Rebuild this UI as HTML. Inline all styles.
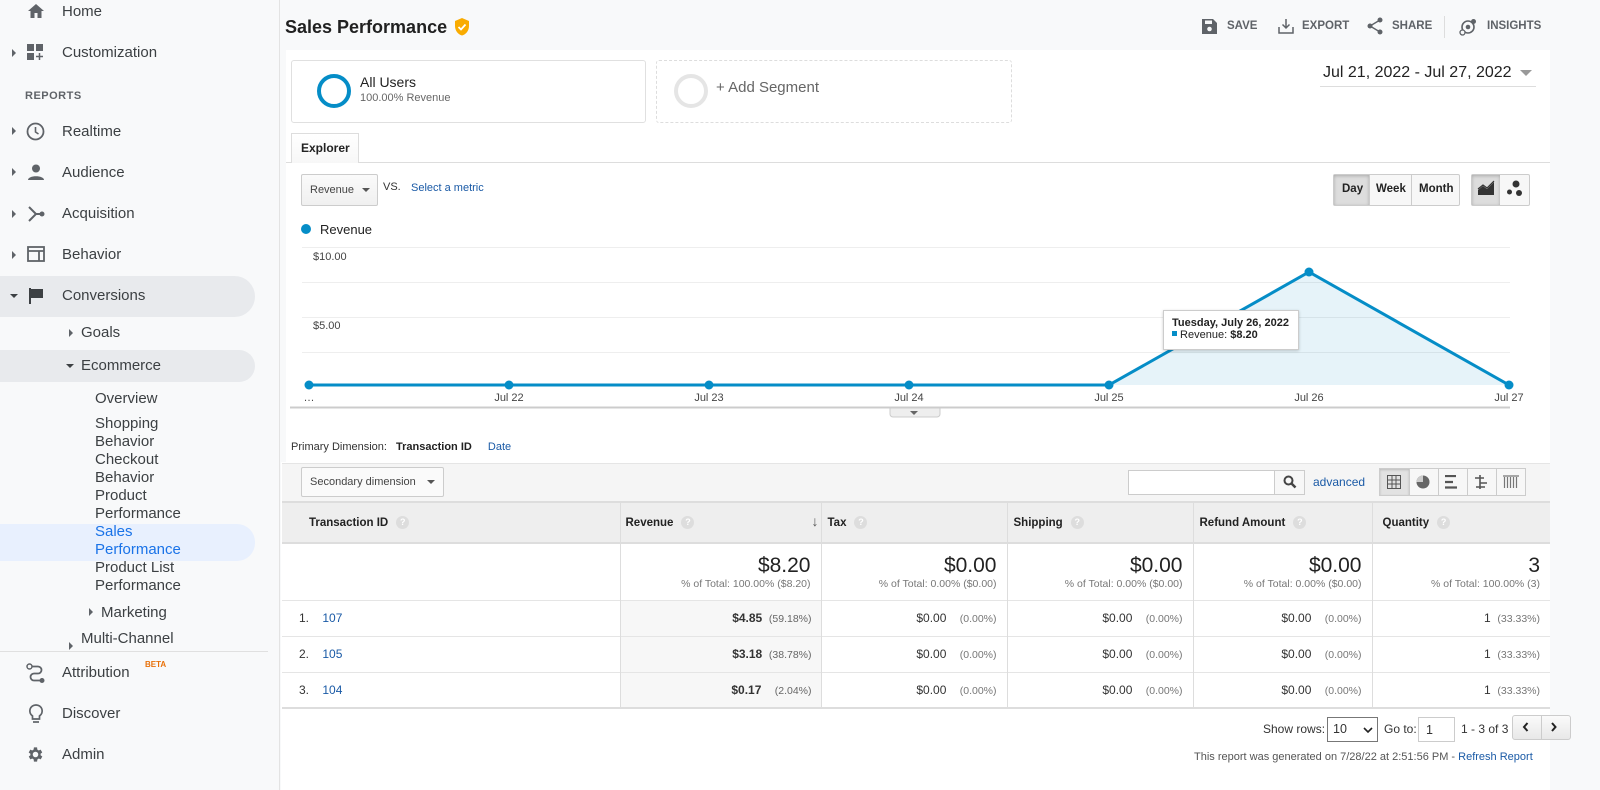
<!DOCTYPE html>
<html><head><meta charset="utf-8"><style>
*{box-sizing:border-box;margin:0;padding:0}
body{width:1600px;height:790px;overflow:hidden;background:#f8f9fa;font-family:"Liberation Sans",Arial,sans-serif;color:#333;position:relative}
.a{position:absolute}
.nav{font-size:15px;color:#3c4043;}
.tri{position:absolute;width:0;height:0;border-top:4px solid transparent;border-bottom:4px solid transparent;border-left:4px solid #5f6368}
.trid{position:absolute;width:0;height:0;border-left:4px solid transparent;border-right:4px solid transparent;border-top:4px solid #3c4043}
.q{display:inline-block;width:13px;height:13px;border-radius:50%;background:#ddd;color:#fff;font-size:9px;text-align:center;line-height:13px;margin-left:8px;vertical-align:1px}
th,td{font-size:12px}
.big{font-size:21px;color:#222}
.sm{font-size:10.5px;color:#777}
.link{color:#1a5aa6}
</style></head><body>
<!-- sidebar -->
<svg class="a" style="left:27px;top:3px" width="18" height="16" viewBox="0 0 18 16"><path d="M9 1L1 8h2.5v7h4v-5h3v5h4V8H17z" fill="#5f6368"/></svg>
<div class="a nav" style="left:62px;top:3px">Home</div>
<div class="tri" style="left:12px;top:49px"></div>
<svg class="a" style="left:27px;top:44px" width="18" height="18"><rect x="0" y="0" width="7" height="7" fill="#5f6368"/><rect x="9" y="0" width="7" height="7" fill="#5f6368"/><rect x="0" y="9" width="7" height="7" fill="#5f6368"/><path d="M12.5 9v7M9 12.5h7" stroke="#5f6368" stroke-width="1.5"/></svg>
<div class="a nav" style="left:62px;top:44px">Customization</div>
<div class="a" style="left:25px;top:90px;font-size:11px;color:#5f6368;font-weight:bold;letter-spacing:.5px">REPORTS</div>
<div class="tri" style="left:12px;top:127px"></div>
<svg class="a" style="left:26px;top:122px" width="19" height="19"><circle cx="9.5" cy="9.5" r="8" fill="none" stroke="#5f6368" stroke-width="1.8"/><path d="M9.5 5v5l3 2" fill="none" stroke="#5f6368" stroke-width="1.6"/></svg>
<div class="a nav" style="left:62px;top:123px">Realtime</div>
<div class="tri" style="left:12px;top:168px"></div>
<svg class="a" style="left:27px;top:164px" width="18" height="16"><circle cx="9" cy="4.5" r="4" fill="#5f6368"/><path d="M1 16c0-5 16-5 16 0z" fill="#5f6368"/></svg>
<div class="a nav" style="left:62px;top:164px">Audience</div>
<div class="tri" style="left:12px;top:210px"></div>
<svg class="a" style="left:27px;top:205px" width="18" height="18"><path d="M2 2l7 7-7 7M9 9h6" fill="none" stroke="#5f6368" stroke-width="2"/><circle cx="15" cy="9" r="2.5" fill="#5f6368"/></svg>
<div class="a nav" style="left:62px;top:205px">Acquisition</div>
<div class="tri" style="left:12px;top:251px"></div>
<svg class="a" style="left:27px;top:246px" width="18" height="16"><rect x="1" y="1" width="16" height="14" fill="none" stroke="#5f6368" stroke-width="1.8"/><path d="M1 5h16M12 5v10" stroke="#5f6368" stroke-width="1.8"/></svg>
<div class="a nav" style="left:62px;top:246px">Behavior</div>
<div class="a" style="left:0;top:276px;width:255px;height:41px;background:#e8eaed;border-radius:0 21px 21px 0"></div>
<div class="trid" style="left:10px;top:294px"></div>
<svg class="a" style="left:29px;top:288px" width="15" height="16"><path d="M1 0v16" stroke="#3c4043" stroke-width="2"/><path d="M2 1h12v9H2z" fill="#3c4043"/></svg>
<div class="a nav" style="left:62px;top:287px">Conversions</div>
<div class="tri" style="left:69px;top:329px"></div>
<div class="a nav" style="left:81px;top:324px">Goals</div>
<div class="a" style="left:0;top:350px;width:255px;height:32px;background:#e8eaed;border-radius:0 16px 16px 0"></div>
<div class="trid" style="left:66px;top:364px"></div>
<div class="a nav" style="left:81px;top:357px">Ecommerce</div>
<div class="a" style="left:0;top:524px;width:255px;height:37px;background:#e8f0fe;border-radius:0 18px 18px 0"></div>
<div class="a nav" style="left:95px;top:390px;line-height:18px">Overview</div>
<div class="a nav" style="left:95px;top:415px;line-height:18px">Shopping<br>Behavior<br>Checkout<br>Behavior<br>Product<br>Performance<br><span style="color:#1a73e8">Sales<br>Performance</span><br>Product List<br>Performance</div>
<div class="tri" style="left:89px;top:608px"></div>
<div class="a nav" style="left:101px;top:604px">Marketing</div>
<div class="tri" style="left:69px;top:642px"></div>
<div class="a nav" style="left:81px;top:630px">Multi-Channel</div>
<div class="a" style="left:0;top:651px;width:268px;height:1px;background:#e0e0e0"></div>
<svg class="a" style="left:26px;top:663px" width="20" height="20"><circle cx="3.5" cy="3.5" r="2.5" fill="none" stroke="#5f6368" stroke-width="1.5"/><path d="M6 3.5h6a3.5 3.5 0 0 1 0 7H8a3.5 3.5 0 0 0 0 7h6" fill="none" stroke="#5f6368" stroke-width="1.8"/><circle cx="16" cy="17.5" r="2.5" fill="#5f6368"/></svg>
<div class="a nav" style="left:62px;top:664px">Attribution</div>
<div class="a" style="left:145px;top:660px;font-size:8px;color:#e8710a;font-weight:bold">BETA</div>
<svg class="a" style="left:28px;top:704px" width="16" height="20"><path d="M8 1a6 6 0 0 0-3.5 11v3h7v-3A6 6 0 0 0 8 1z" fill="none" stroke="#5f6368" stroke-width="1.7"/><path d="M5 18h6" stroke="#5f6368" stroke-width="1.7"/></svg>
<div class="a nav" style="left:62px;top:705px">Discover</div>
<svg class="a" style="left:26px;top:745px" width="19" height="19" viewBox="0 0 24 24"><path fill="#5f6368" d="M19.4 13a7.5 7.5 0 0 0 0-2l2.1-1.6-2-3.5-2.5 1a7 7 0 0 0-1.7-1L15 3h-4l-.4 2.9a7 7 0 0 0-1.7 1l-2.5-1-2 3.5L6.6 11a7.5 7.5 0 0 0 0 2l-2.1 1.6 2 3.5 2.5-1a7 7 0 0 0 1.7 1L11 21h4l.4-2.9a7 7 0 0 0 1.7-1l2.5 1 2-3.5zM13 15.5a3.5 3.5 0 1 1 0-7 3.5 3.5 0 0 1 0 7z" transform="translate(-1 0)"/></svg>
<div class="a nav" style="left:62px;top:746px">Admin</div>
<div class="a" style="left:279px;top:0;width:1px;height:790px;background:#e3e3e3"></div>

<!-- header -->
<div class="a" style="left:285px;top:17px;font-size:18px;font-weight:bold;color:#212121;white-space:nowrap">Sales Performance <svg style="vertical-align:-3px;margin-left:2px" width="16" height="18"><path d="M8 0L1 3v5c0 4.5 3 8.5 7 9.5 4-1 7-5 7-9.5V3z" fill="#f9ab00"/><path d="M4.5 9l2.5 2.5 4.5-5" fill="none" stroke="#fff" stroke-width="1.8"/></svg></div>
<div class="a" style="left:1202px;top:20px;font-size:11.5px;font-weight:bold;color:#5f6368;word-spacing:2px">
<svg style="position:absolute;left:0;top:-1px" width="15" height="15"><path d="M0 0h11l4 4v11H0z" fill="#5f6368"/><rect x="3" y="1.5" width="7" height="3.5" fill="#f8f9fa"/><circle cx="7.5" cy="10" r="2.3" fill="#f8f9fa"/></svg>
<span style="position:absolute;left:25px">SAVE</span>
<svg style="position:absolute;left:76px;top:-2px" width="16" height="16"><path d="M8 1v9M4.5 6.5L8 10l3.5-3.5M1 9v6h14V9" fill="none" stroke="#5f6368" stroke-width="1.5"/></svg>
<span style="position:absolute;left:100px">EXPORT</span>
<svg style="position:absolute;left:165px;top:-3px" width="16" height="18"><circle cx="13" cy="3" r="2.5" fill="#5f6368"/><circle cx="3" cy="9" r="2.5" fill="#5f6368"/><circle cx="13" cy="15" r="2.5" fill="#5f6368"/><path d="M13 3L3 9l10 6" fill="none" stroke="#5f6368" stroke-width="1.4"/></svg>
<span style="position:absolute;left:190px">SHARE</span>
<div style="position:absolute;left:242px;top:-4px;width:1px;height:22px;background:#ddd"></div>
<svg style="position:absolute;left:257px;top:-2px" width="18" height="18"><circle cx="9" cy="9" r="6" fill="none" stroke="#5f6368" stroke-width="1.6"/><circle cx="9" cy="9" r="2.3" fill="#5f6368"/><circle cx="14.5" cy="3.5" r="2.5" fill="#5f6368"/><circle cx="3.5" cy="14.5" r="2.5" fill="#f8f9fa" stroke="#5f6368" stroke-width="1.3"/></svg>
<span style="position:absolute;left:285px">INSIGHTS</span>
</div>

<!-- main panel -->
<div class="a" style="left:286px;top:50px;width:1264px;height:740px;background:#fff"></div>
<div class="a" style="left:281px;top:462px;width:1269px;height:328px;background:#fff"></div>
<div class="a" style="left:291px;top:60px;width:355px;height:63px;border:1px solid #e0e0e0;border-radius:3px"></div>
<div class="a" style="left:317px;top:74px;width:34px;height:34px;border:4px solid #058dc7;border-radius:50%"></div>
<div class="a" style="left:360px;top:74px;font-size:14px;color:#222">All Users</div>
<div class="a" style="left:360px;top:92px;font-size:11px;color:#666">100.00% Revenue</div>
<div class="a" style="left:656px;top:60px;width:356px;height:63px;border:1px dashed #ddd;border-radius:3px"></div>
<div class="a" style="left:674px;top:74px;width:34px;height:34px;border:4px solid #e5e5e5;border-radius:50%"></div>
<div class="a" style="left:716px;top:79px;font-size:15px;color:#666">+ Add Segment</div>
<div class="a" style="left:1323px;top:64px;font-size:16px;color:#222">Jul 21, 2022 - Jul 27, 2022</div>
<div class="a" style="left:1520px;top:70px;border-left:6px solid transparent;border-right:6px solid transparent;border-top:6px solid #999"></div>
<div class="a" style="left:1320px;top:86px;width:216px;height:1px;background:#ddd"></div>

<div class="a" style="left:286px;top:162px;width:1264px;height:1px;background:#ddd"></div>
<div class="a" style="left:291px;top:133px;width:68px;height:30px;border:1px solid #ddd;border-bottom:none;background:linear-gradient(#fff,#f7f7f7);font-size:12px;font-weight:bold;color:#222;padding:7px 0 0 9px">Explorer</div>

<div class="a" style="left:301px;top:174px;width:77px;height:32px;border:1px solid #ccc;border-radius:2px;background:linear-gradient(#fafafa,#f0f0f0);font-size:11px;color:#444;padding:9px 0 0 8px">Revenue</div>
<div class="a" style="left:362px;top:188px;border-left:4px solid transparent;border-right:4px solid transparent;border-top:4px solid #555"></div>
<div class="a" style="left:383px;top:181px;font-size:11px;color:#333">VS.</div>
<div class="a link" style="left:411px;top:182px;font-size:11px">Select a metric</div>

<div class="a" style="left:1333px;top:174px;width:127px;height:32px;border:1px solid #ccc;border-radius:2px;background:#f7f7f7;font-size:11.5px;font-weight:bold;color:#333"></div>
<div class="a" style="left:1334px;top:175px;width:35px;height:30px;background:#ddd;box-shadow:inset 0 1px 3px #aaa"></div>
<div class="a" style="left:1369px;top:175px;width:1px;height:30px;background:#ccc"></div>
<div class="a" style="left:1411px;top:175px;width:1px;height:30px;background:#ccc"></div>
<div class="a" style="left:1342px;top:183px;font-size:11.5px;font-weight:bold;color:#222">Day</div>
<div class="a" style="left:1376px;top:183px;font-size:11.5px;font-weight:bold;color:#222">Week</div>
<div class="a" style="left:1419px;top:183px;font-size:11.5px;font-weight:bold;color:#222">Month</div>
<div class="a" style="left:1471px;top:174px;width:59px;height:32px;border:1px solid #ccc;border-radius:2px;background:#f7f7f7"></div>
<div class="a" style="left:1472px;top:175px;width:28px;height:30px;background:#ddd;box-shadow:inset 0 1px 3px #aaa"></div>
<svg class="a" style="left:1477px;top:180px" width="18" height="16"><path d="M1 15V10l5-4 4 3 7-7v13z" fill="#333"/><path d="M1 9l5-4 4 3 7-7" fill="none" stroke="#333" stroke-width="1.2"/></svg>
<svg class="a" style="left:1506px;top:180px" width="18" height="18"><circle cx="10" cy="4" r="3.5" fill="#333"/><circle cx="3.5" cy="12" r="2.5" fill="#333"/><circle cx="13" cy="13" r="3" fill="#333"/></svg>

<!-- chart -->
<div class="a" style="left:301px;top:224px;width:10px;height:10px;border-radius:50%;background:#058dc7"></div>
<div class="a" style="left:320px;top:222px;font-size:13px;color:#222">Revenue</div>
<svg class="a" style="left:280px;top:240px" width="1270" height="190">
<g stroke="#eee" stroke-width="1"><path d="M22 7.5H1230M22 42.5H1230M22 77.5H1230M22 112.5H1230"/></g>
<path d="M10 167.5H1230" stroke="#ccc" stroke-width="2"/>
<text x="33" y="20" font-size="11" fill="#444" font-family="Liberation Sans">$10.00</text>
<text x="33" y="89" font-size="11" fill="#444" font-family="Liberation Sans">$5.00</text>
<path d="M829 145L1029 32L1229 145z" fill="#058dc7" fill-opacity=".1"/>
<path d="M29 145H829L1029 32L1229 145" fill="none" stroke="#058dc7" stroke-width="3"/>
<g fill="#058dc7"><circle cx="29" cy="145" r="4.5"/><circle cx="229" cy="145" r="4.5"/><circle cx="429" cy="145" r="4.5"/><circle cx="629" cy="145" r="4.5"/><circle cx="829" cy="145" r="4.5"/><circle cx="1029" cy="32" r="4.5"/><circle cx="1229" cy="145" r="4.5"/></g>
<g font-size="11" fill="#444" font-family="Liberation Sans" text-anchor="middle"><text x="29" y="161">…</text><text x="229" y="161">Jul 22</text><text x="429" y="161">Jul 23</text><text x="629" y="161">Jul 24</text><text x="829" y="161">Jul 25</text><text x="1029" y="161">Jul 26</text><text x="1229" y="161">Jul 27</text></g>
<path d="M610 168h50v6a3 3 0 0 1-3 3h-44a3 3 0 0 1-3-3z" fill="#eee" stroke="#ccc"/><path d="M630 171h8l-4 4z" fill="#666"/>
</svg>
<div class="a" style="left:1163px;top:310px;width:136px;height:40px;background:#fff;border:1px solid #ccc;box-shadow:0 1px 3px rgba(0,0,0,.2);font-size:11px;padding:6px 0 0 8px;color:#222"><b>Tuesday, July 26, 2022</b><br><span style="display:inline-block;width:5px;height:5px;background:#058dc7;vertical-align:2px"></span> Revenue: <b>$8.20</b></div>

<div class="a" style="left:291px;top:441px;font-size:11px;color:#333">Primary Dimension: <b style="margin-left:6px;color:#222">Transaction ID</b> <span class="link" style="margin-left:13px">Date</span></div>

<!-- toolbar -->
<div class="a" style="left:282px;top:463px;width:1268px;height:38px;background:#f5f5f5;border-top:1px solid #e5e5e5"></div>
<div class="a" style="left:301px;top:467px;width:143px;height:30px;border:1px solid #ccc;border-radius:2px;background:#fafafa;font-size:11px;color:#444;padding:8px 0 0 8px">Secondary dimension</div>
<div class="a" style="left:427px;top:480px;border-left:4px solid transparent;border-right:4px solid transparent;border-top:4px solid #555"></div>
<div class="a" style="left:1128px;top:470px;width:177px;height:25px;border:1px solid #ccc;background:#fff"></div>
<div class="a" style="left:1274px;top:470px;width:31px;height:25px;border:1px solid #ccc;background:#f7f7f7"></div>
<svg class="a" style="left:1283px;top:475px" width="14" height="14"><circle cx="5.5" cy="5.5" r="4" fill="none" stroke="#444" stroke-width="2"/><path d="M8.5 8.5l4 4" stroke="#444" stroke-width="2.5"/></svg>
<div class="a link" style="left:1313px;top:475px;font-size:12px">advanced</div>
<div class="a" style="left:1379px;top:468px;width:147px;height:28px;border:1px solid #ccc;background:#f7f7f7"></div>
<div class="a" style="left:1380px;top:469px;width:29px;height:26px;background:#e2e2e2;box-shadow:inset 0 1px 2px #bbb"></div>
<div class="a" style="left:1409px;top:469px;width:1px;height:26px;background:#ccc"></div>
<div class="a" style="left:1438px;top:469px;width:1px;height:26px;background:#ccc"></div>
<div class="a" style="left:1467px;top:469px;width:1px;height:26px;background:#ccc"></div>
<div class="a" style="left:1496px;top:469px;width:1px;height:26px;background:#ccc"></div>
<svg class="a" style="left:1387px;top:475px" width="14" height="14"><path d="M.5.5h13v13H.5zM5 .5v13M9 .5v13M.5 5h13M.5 9h13" fill="none" stroke="#555"/></svg>
<svg class="a" style="left:1416px;top:475px" width="14" height="14"><circle cx="7" cy="7" r="6.5" fill="#666"/><path d="M7 7V.5A6.5 6.5 0 0 0 .5 7z" fill="#ccc"/></svg>
<svg class="a" style="left:1445px;top:475px" width="14" height="14"><path d="M0 1h11M0 7h8M0 12.5h12" stroke="#555" stroke-width="2.2"/></svg>
<svg class="a" style="left:1474px;top:475px" width="14" height="14"><path d="M6 0v14M1 3h9M6 8h7M2 12h9" stroke="#555" stroke-width="1.6"/></svg>
<svg class="a" style="left:1503px;top:475px" width="16" height="14"><path d="M1.5 2v11M4.5 2v11M7.5 2v11M10.5 2v11M13.5 2v11M0 1h16" stroke="#777" stroke-width="1.2"/></svg>

<!-- table -->
<table class="a" style="left:282px;top:501px;width:1268px;border-collapse:collapse;table-layout:fixed">
<colgroup><col style="width:338px"><col style="width:201px"><col style="width:186px"><col style="width:186px"><col style="width:179px"><col style="width:178px"></colgroup>
<tr style="height:41px;background:#eee;border-top:2px solid #ddd;border-bottom:2px solid #ddd">
<th style="text-align:left;padding-left:27px;font-size:11.5px;color:#222;vertical-align:top;padding-top:13px">Transaction ID<span class="q">?</span></th>
<th style="text-align:left;padding-left:5px;font-size:11.5px;color:#222;border-left:1px solid #ddd;position:relative">Revenue<span class="q">?</span><span style="position:absolute;right:2px;top:10px;font-size:14px;color:#555;font-weight:normal">↓</span></th>
<th style="text-align:left;padding-left:6px;font-size:11.5px;color:#222;border-left:1px solid #ddd">Tax<span class="q">?</span></th>
<th style="text-align:left;padding-left:6px;font-size:11.5px;color:#222;border-left:1px solid #ddd">Shipping<span class="q">?</span></th>
<th style="text-align:left;padding-left:6px;font-size:11.5px;color:#222;border-left:1px solid #ddd">Refund Amount<span class="q">?</span></th>
<th style="text-align:left;padding-left:10px;font-size:11.5px;color:#222;border-left:1px solid #ddd">Quantity<span class="q">?</span></th>
</tr>
<tr style="height:57px;text-align:right;border-bottom:1px solid #e5e5e5">
<td></td>
<td style="border-left:1px solid #ddd;padding-right:10px"><div class="big">$8.20</div><div class="sm">% of Total: 100.00% ($8.20)</div></td>
<td style="border-left:1px solid #ddd;padding-right:10px"><div class="big">$0.00</div><div class="sm">% of Total: 0.00% ($0.00)</div></td>
<td style="border-left:1px solid #ddd;padding-right:10px"><div class="big">$0.00</div><div class="sm">% of Total: 0.00% ($0.00)</div></td>
<td style="border-left:1px solid #ddd;padding-right:10px"><div class="big">$0.00</div><div class="sm">% of Total: 0.00% ($0.00)</div></td>
<td style="border-left:1px solid #ddd;padding-right:10px"><div class="big">3</div><div class="sm">% of Total: 100.00% (3)</div></td>
</tr>
<tr style="height:36px;border-bottom:1px solid #e5e5e5;text-align:right"><td style="text-align:left;padding-left:17px">1.&nbsp;&nbsp;&nbsp;&nbsp;<span class="link">107</span></td><td style="border-left:1px solid #ddd;background:#f7f7f7;padding-right:9px"><b>$4.85</b>&nbsp;&nbsp;<span class="sm" style="color:#666">(59.18%)</span></td><td style="border-left:1px solid #ddd;padding-right:10px">$0.00&nbsp;&nbsp;&nbsp;&nbsp;<span class="sm">(0.00%)</span></td><td style="border-left:1px solid #ddd;padding-right:10px">$0.00&nbsp;&nbsp;&nbsp;&nbsp;<span class="sm">(0.00%)</span></td><td style="border-left:1px solid #ddd;padding-right:10px">$0.00&nbsp;&nbsp;&nbsp;&nbsp;<span class="sm">(0.00%)</span></td><td style="border-left:1px solid #ddd;padding-right:10px">1&nbsp;&nbsp;<span class="sm">(33.33%)</span></td></tr>
<tr style="height:36px;border-bottom:1px solid #e5e5e5;text-align:right"><td style="text-align:left;padding-left:17px">2.&nbsp;&nbsp;&nbsp;&nbsp;<span class="link">105</span></td><td style="border-left:1px solid #ddd;background:#f7f7f7;padding-right:9px"><b>$3.18</b>&nbsp;&nbsp;<span class="sm" style="color:#666">(38.78%)</span></td><td style="border-left:1px solid #ddd;padding-right:10px">$0.00&nbsp;&nbsp;&nbsp;&nbsp;<span class="sm">(0.00%)</span></td><td style="border-left:1px solid #ddd;padding-right:10px">$0.00&nbsp;&nbsp;&nbsp;&nbsp;<span class="sm">(0.00%)</span></td><td style="border-left:1px solid #ddd;padding-right:10px">$0.00&nbsp;&nbsp;&nbsp;&nbsp;<span class="sm">(0.00%)</span></td><td style="border-left:1px solid #ddd;padding-right:10px">1&nbsp;&nbsp;<span class="sm">(33.33%)</span></td></tr>
<tr style="height:36px;border-bottom:2px solid #ddd;text-align:right"><td style="text-align:left;padding-left:17px">3.&nbsp;&nbsp;&nbsp;&nbsp;<span class="link">104</span></td><td style="border-left:1px solid #ddd;background:#f7f7f7;padding-right:9px"><b>$0.17</b>&nbsp;&nbsp;&nbsp;&nbsp;<span class="sm" style="color:#666">(2.04%)</span></td><td style="border-left:1px solid #ddd;padding-right:10px">$0.00&nbsp;&nbsp;&nbsp;&nbsp;<span class="sm">(0.00%)</span></td><td style="border-left:1px solid #ddd;padding-right:10px">$0.00&nbsp;&nbsp;&nbsp;&nbsp;<span class="sm">(0.00%)</span></td><td style="border-left:1px solid #ddd;padding-right:10px">$0.00&nbsp;&nbsp;&nbsp;&nbsp;<span class="sm">(0.00%)</span></td><td style="border-left:1px solid #ddd;padding-right:10px">1&nbsp;&nbsp;<span class="sm">(33.33%)</span></td></tr>
</table>

<!-- footer -->
<div class="a" style="left:1263px;top:722px;font-size:12px;color:#333">Show rows:</div>
<div class="a" style="left:1327px;top:717px;width:51px;height:25px;border:1px solid #777;font-size:12.5px;padding:4px 0 0 5px">10</div>
<svg class="a" style="left:1363px;top:727px" width="10" height="7"><path d="M1 1l4 4 4-4" fill="none" stroke="#222" stroke-width="1.6"/></svg>
<div class="a" style="left:1384px;top:722px;font-size:12px;color:#333">Go to:</div>
<div class="a" style="left:1418px;top:717px;width:37px;height:25px;border:1px solid #ccc;font-size:12.5px;padding:5px 0 0 7px">1</div>
<div class="a" style="left:1461px;top:722px;font-size:12px;color:#333">1 - 3 of 3</div>
<div class="a" style="left:1512px;top:715px;width:59px;height:25px;border:1px solid #ccc;border-radius:3px;background:linear-gradient(#fafafa,#e8e8e8)"></div>
<div class="a" style="left:1541px;top:716px;width:1px;height:23px;background:#ccc"></div>
<svg class="a" style="left:1522px;top:722px" width="8" height="10"><path d="M5.5 1L2 5l3.5 4" fill="none" stroke="#222" stroke-width="2"/></svg>
<svg class="a" style="left:1550px;top:722px" width="8" height="10"><path d="M2 1l3.5 4L2 9" fill="none" stroke="#222" stroke-width="2"/></svg>
<div class="a" style="left:1194px;top:751px;font-size:11px;color:#555">This report was generated on 7/28/22 at 2:51:56 PM - <span class="link">Refresh Report</span></div>
</body></html>
